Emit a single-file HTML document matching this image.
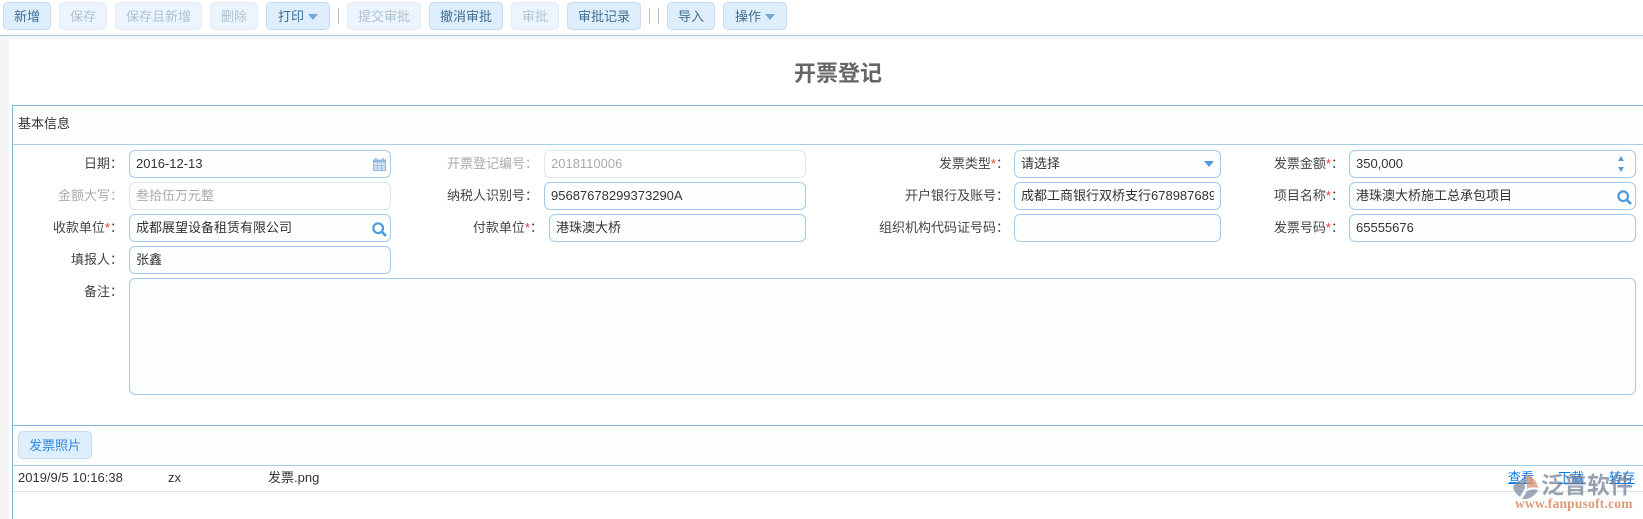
<!DOCTYPE html>
<html lang="zh">
<head>
<meta charset="utf-8">
<title>开票登记</title>
<style>
html,body{margin:0;padding:0;width:1643px;height:519px;overflow:hidden;background:#f5f5f5;font-family:"Liberation Sans","Noto Sans CJK SC",sans-serif;font-size:13px;color:#333}
div,a,span{position:absolute;box-sizing:border-box}
span.s{position:static;color:#f33}
.bar{left:0;top:0;width:1643px;height:36px;background:#fff;border-bottom:1px solid #a9c8dc}
.b{top:2px;height:28px;line-height:27px;text-align:center;border:1px solid #c6dcee;border-radius:5px;background:#deeefc;color:#3f6f94;white-space:nowrap}
.d{background:#ecf5fd;border-color:#e0ecf6;color:#adc3d4}
.sep{top:8px;width:1px;height:16px;background:#bbb}
.car{width:0;height:0;border-left:5px solid transparent;border-right:5px solid transparent;border-top:6px solid #74a6d2}
.main{left:9px;top:39px;width:1634px;height:480px;background:#fff}
.title{left:9px;top:58px;width:1658px;text-align:center;font-size:22px;font-weight:bold;color:#666;line-height:32px}
.panel{left:12px;top:105px;width:1631px;height:414px;border-left:1px solid #7fb5dc;border-top:1px solid #7fb5dc}
.hl{left:13px;width:1630px;height:1px;background:#a6cde8}
.l{height:28px;line-height:26px;margin:1px 0 0 6px;text-align:right;white-space:nowrap;color:#444}
.g{color:#aaa}
.i{height:28px;line-height:26px;border:1px solid #a5cbe8;border-radius:6px;background:#fdfefe;padding-left:6px;white-space:nowrap;overflow:hidden;color:#333}
.di{border-color:#d8e7f3;color:#aaa;background:#fff}
</style>
</head>
<body>
<div class="bar"></div>
<div class="b" style="left:3px;width:48px">新增</div>
<div class="b d" style="left:59px;width:48px">保存</div>
<div class="b d" style="left:115px;width:87px">保存且新增</div>
<div class="b d" style="left:210px;width:48px">删除</div>
<div class="b" style="left:266px;width:64px;text-align:left;padding-left:11px">打印<div class="car" style="left:41px;top:11px"></div></div>
<div class="sep" style="left:338px"></div>
<div class="b d" style="left:347px;width:74px">提交审批</div>
<div class="b" style="left:429px;width:74px">撤消审批</div>
<div class="b d" style="left:511px;width:48px">审批</div>
<div class="b" style="left:567px;width:74px">审批记录</div>
<div class="sep" style="left:649px"></div>
<div class="sep" style="left:658px"></div>
<div class="b" style="left:667px;width:48px">导入</div>
<div class="b" style="left:723px;width:64px;text-align:left;padding-left:11px">操作<div class="car" style="left:41px;top:11px"></div></div>

<div class="main"></div>
<div class="title">开票登记</div>
<div class="panel"></div>
<div style="left:13px;top:106px;width:1630px;height:38px;background:#fcfefe"></div>
<div style="left:18px;top:111px;line-height:26px;color:#333">基本信息</div>
<div class="hl" style="top:144px"></div>

<!-- Labels -->
<div class="l" style="left:20px;width:97px;top:150px">日期：</div>
<div class="l g" style="left:20px;width:97px;top:182px">金额大写：</div>
<div class="l" style="left:20px;width:97px;top:214px">收款单位<span class="s">*</span>：</div>
<div class="l" style="left:20px;width:97px;top:246px">填报人：</div>
<div class="l" style="left:20px;width:97px;top:278px">备注：</div>

<div class="l g" style="left:420px;width:112px;top:150px">开票登记编号：</div>
<div class="l" style="left:420px;width:112px;top:182px">纳税人识别号：</div>
<div class="l" style="left:420px;width:117px;top:214px">付款单位<span class="s">*</span>：</div>

<div class="l" style="left:850px;width:153px;top:150px">发票类型<span class="s">*</span>：</div>
<div class="l" style="left:850px;width:153px;top:182px">开户银行及账号：</div>
<div class="l" style="left:850px;width:153px;top:214px">组织机构代码证号码：</div>

<div class="l" style="left:1240px;width:98px;top:150px">发票金额<span class="s">*</span>：</div>
<div class="l" style="left:1240px;width:98px;top:182px">项目名称<span class="s">*</span>：</div>
<div class="l" style="left:1240px;width:98px;top:214px">发票号码<span class="s">*</span>：</div>

<!-- Inputs -->
<div class="i" style="left:129px;width:262px;top:150px">2016-12-13
<svg style="position:absolute;left:243px;top:7px" width="13" height="13" viewBox="0 0 13 13"><rect x="0.5" y="2" width="12" height="10.5" fill="#dbe8f8" stroke="#8fb7e2"/><rect x="0" y="2" width="13" height="2.5" fill="#8fb7e2"/><path d="M3 0v3M10 0v3" stroke="#8fb7e2" stroke-width="1.6"/><path d="M4.500 5v7M8.500 5v7M1 7.500h11M1 10h11" stroke="#8fb7e2" stroke-width="0.8"/></svg></div>
<div class="i di" style="left:129px;width:262px;top:182px">叁拾伍万元整</div>
<div class="i" style="left:129px;width:262px;top:214px">成都展望设备租赁有限公司
<svg style="position:absolute;left:242px;top:7px" width="15" height="15" viewBox="0 0 15 15"><circle cx="6.200" cy="6.200" r="4.800" fill="none" stroke="#4f9bd9" stroke-width="2.200"/><path d="M9.800 9.800L14 14" stroke="#4f9bd9" stroke-width="2.600"/></svg></div>
<div class="i" style="left:129px;width:262px;top:246px">张鑫</div>
<div class="i" style="left:129px;width:1507px;top:278px;height:117px"></div>

<div class="i di" style="left:544px;width:262px;top:150px">2018110006</div>
<div class="i" style="left:544px;width:262px;top:182px">95687678299373290A</div>
<div class="i" style="left:549px;width:257px;top:214px">港珠澳大桥</div>

<div class="i" style="left:1014px;width:207px;top:150px">请选择<div class="car" style="left:189px;top:10px;border-top:6px solid #4f9bd9"></div></div>
<div class="i" style="left:1014px;width:207px;top:182px"><div style="left:6px;top:0;width:193px;overflow:hidden;height:26px">成都工商银行双桥支行6789876898</div></div>
<div class="i" style="left:1014px;width:207px;top:214px"></div>

<div class="i" style="left:1349px;width:287px;top:150px">350,000
<div style="left:268px;top:5px;width:0;height:0;border-left:3.500px solid transparent;border-right:3.500px solid transparent;border-bottom:5px solid #5a9ad4"></div>
<div style="left:268px;top:16px;width:0;height:0;border-left:3.500px solid transparent;border-right:3.500px solid transparent;border-top:5px solid #5a9ad4"></div></div>
<div class="i" style="left:1349px;width:287px;top:182px">港珠澳大桥施工总承包项目
<svg style="position:absolute;left:267px;top:7px" width="15" height="15" viewBox="0 0 15 15"><circle cx="6.200" cy="6.200" r="4.800" fill="none" stroke="#4f9bd9" stroke-width="2.200"/><path d="M9.800 9.800L14 14" stroke="#4f9bd9" stroke-width="2.600"/></svg></div>
<div class="i" style="left:1349px;width:287px;top:214px">65555676</div>

<!-- Attachments -->
<div style="left:13px;top:425px;width:1630px;height:1px;background:#7fb5dc"></div>
<div style="left:13px;top:426px;width:1630px;height:39px;background:#fcfefe"></div>
<div class="b" style="left:18px;top:431px;width:74px;color:#2f8ae0">发票照片</div>
<div class="hl" style="top:465px"></div>
<div style="left:18px;top:465px;line-height:26px">2019/9/5 10:16:38</div>
<div style="left:168px;top:465px;line-height:26px">zx</div>
<div style="left:268px;top:465px;line-height:26px">发票.png</div>
<div style="left:13px;top:491px;width:1630px;height:1px;background:#e2e2e2"></div>
<a style="left:1508px;top:465px;line-height:26px;color:#0a7be8;text-decoration:underline">查看</a>
<a style="left:1558px;top:465px;line-height:26px;color:#0a7be8;text-decoration:underline">下载</a>
<a style="left:1609px;top:465px;line-height:26px;color:#0a7be8;text-decoration:underline">转存</a>

<!-- Watermark -->
<svg style="position:absolute;left:1512px;top:474px" width="28" height="26" viewBox="0 0 28 26"><path d="M13 1C19 1 25 6 26 14C22 13 18 13 15 15C15 10 14 5 13 1Z" fill="#dc9a78" opacity=".8"/><path d="M1 13C3 9 7 6 12 5L13 14L8 23C4 20 2 17 1 13Z" fill="#7f8ba3" opacity=".75"/><path d="M10 25L15 17C19 15 23 15 26 16C23 22 17 26 10 25Z" fill="#7f8ba3" opacity=".75"/></svg>
<div style="left:1541px;top:472px;font-size:23px;line-height:26px;font-weight:bold;color:#6d7a92;opacity:.7;white-space:nowrap">泛普软件</div>
<div style="left:1515px;top:497px;font-family:'Liberation Serif',serif;font-weight:bold;font-size:13.500px;line-height:14px;letter-spacing:.22px;color:#dd9a78;white-space:nowrap">www.fanpusoft.com</div>
</body>
</html>
